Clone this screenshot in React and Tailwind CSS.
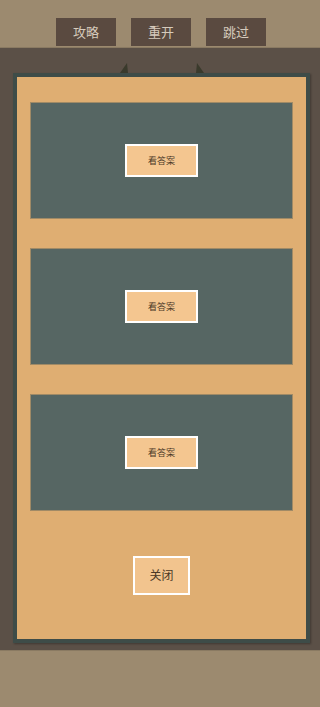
import React from 'react';

const AnswerBox = () => (
  <div className="h-[117px] bg-[#566663] border border-[#a08a66] flex items-center justify-center">
    <button className="w-[73px] h-[33px] bg-[#f4c690] border-2 border-white text-[9px] text-[#4a3826]">
      看答案
    </button>
  </div>
);

const App = () => {
  return (
    <div
      className="h-[707px] w-[320px] flex flex-col overflow-hidden"
      style={{ fontFamily: '"Noto Sans CJK SC", "Noto Sans", sans-serif' }}
    >
      {/* top bar */}
      <div className="h-[48px] bg-[#9c8a6f] border-b border-[#8a7a62] flex justify-center gap-[15px] pt-[18px] pl-[2px]">
        {['攻略', '重开', '跳过'].map((t) => (
          <button key={t} className="w-[60px] h-[28px] bg-[#5a4a40] text-[13px] text-[#d6cabc]">
            {t}
          </button>
        ))}
      </div>

      {/* middle */}
      <div className="flex-1 bg-[#5b5047] pt-[25px] pb-[7px]">
        <div className="relative ml-[13px] w-[297px] h-[570px] border-4 border-[#3e4c48] bg-[#dfae72] px-[13px] pt-[25px] flex flex-col shadow-[1px_1px_2px_rgba(0,0,0,0.3)]">
          {/* little tabs */}
          <svg className="absolute left-[103px] -top-[14px]" width="8" height="10" viewBox="0 0 8 10">
            <polygon points="7,0 8,10 0,10" fill="#3a3a2c" />
          </svg>
          <svg className="absolute left-[179px] -top-[14px]" width="8" height="10" viewBox="0 0 8 10">
            <polygon points="1,0 8,10 0,10" fill="#3a3a2c" />
          </svg>

          <div className="flex flex-col gap-[29px]">
            <AnswerBox />
            <AnswerBox />
            <AnswerBox />
          </div>

          <div className="flex-1 flex items-center justify-center">
            <button className="w-[57px] h-[39px] bg-[#f2c48e] border-2 border-white text-[12px] text-[#4a3826]">
              关闭
            </button>
          </div>
        </div>
      </div>

      {/* bottom */}
      <div className="h-[57px] bg-[#9c8a6f] border-t border-[#8a7a62]" />
    </div>
  );
};

export default App;
